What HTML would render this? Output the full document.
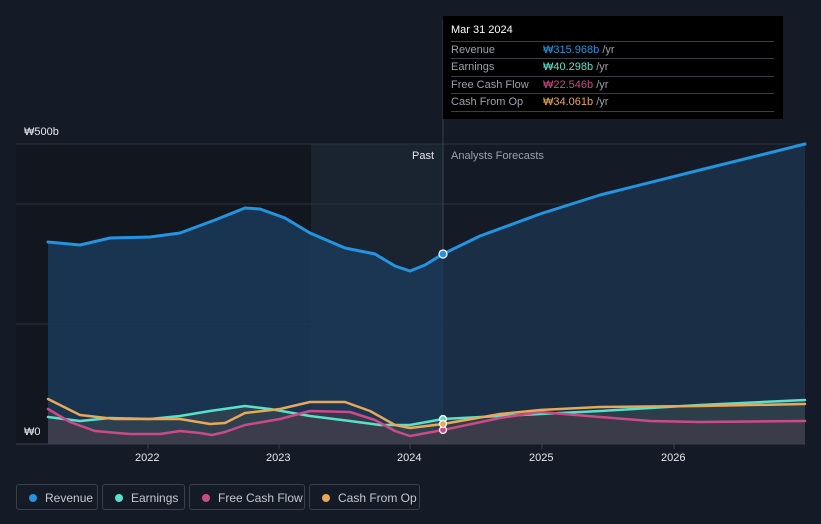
<!DOCTYPE html>
<html><head><meta charset="utf-8"><style>
body{margin:0;width:821px;height:524px;background:#151b26;font-family:"Liberation Sans","Noto Sans CJK KR",sans-serif;overflow:hidden;position:relative}
.tt{position:absolute;left:443px;top:16px;width:340px;height:103px;background:#000;color:#fff;font-size:11px}
.tt .h{position:absolute;left:8px;top:8px;font-size:11px}
.row{position:absolute;left:8px;width:323px;height:17px;border-top:1px solid #3a3f47;color:#9ba1aa;line-height:17px}
.row span{position:absolute;left:92px}
.leg{position:absolute;top:484px;height:26px;border:1px solid #3b414b;border-radius:3px;color:#c4c8ce;font-size:12px;line-height:26px;box-sizing:border-box}
.leg i{position:absolute;left:12px;top:9px;width:8px;height:8px;border-radius:50%}
.leg b{font-weight:normal;position:absolute;left:28px}
.ax{position:absolute;color:#e6e8eb;font-size:11px}
</style></head><body>
<svg width="821" height="524" style="position:absolute;left:0;top:0">
<defs><linearGradient id="g" x1="0" y1="0" x2="0" y2="1"><stop offset="0" stop-color="#1e3a57"/><stop offset="1" stop-color="#16283c"/></linearGradient></defs>
<rect x="16" y="144" width="427" height="300" fill="#12171f"/>
<rect x="311" y="144" width="132" height="300" fill="#1a2330"/>
<line x1="16" y1="144" x2="805" y2="144" stroke="#2c333e"/>
<line x1="16" y1="204" x2="805" y2="204" stroke="#2c333e"/>
<line x1="16" y1="324" x2="805" y2="324" stroke="#2c333e"/>
<line x1="16" y1="444" x2="805" y2="444" stroke="#3a414c"/>
<line x1="443" y1="20" x2="443" y2="444" stroke="#3a414c"/>
<path d="M48,242 L80,245 L110,238 L150,237 L180,233 L215,220 L245,208 L260,209 L285,218 L310,233 L345,248 L375,254 L395,266 L410,271 L425,265 L443,254 L443,444 L48,444Z" fill="#1b3a59" opacity="0.85"/>
<path d="M443,254 L480,236 L540,214 L600,195 L700,170 L805,144 L805,444 L443,444Z" fill="#1b3149" opacity="0.9"/>
<path d="M48,417 L80,421 L110,418 L150,419 L180,416 L210,411 L245,406 L270,409 L310,416 L350,421 L380,425 L410,425 L443,419 L500,416 L600,411 L700,405 L805,400 L805,444 L48,444Z" fill="#3a4a50" opacity="0.6"/>
<path d="M48,409 L70,422 L95,431 L130,434 L160,434 L180,431 L200,433 L212,435 L225,432 L245,425 L280,419 L310,411 L350,412 L375,420 L395,431 L410,436 L443,430 L500,418 L540,412 L600,417 L650,421 L700,422 L805,421 L805,444 L48,444Z" fill="#4a3a48" opacity="0.5"/>
<g fill="none" stroke-width="3" stroke-linejoin="round" stroke-linecap="round">
<path d="M48,242 L80,245 L110,238 L150,237 L180,233 L215,220 L245,208 L260,209 L285,218 L310,233 L345,248 L375,254 L395,266 L410,271 L425,265 L443,254 L480,236 L540,214 L600,195 L700,170 L805,144" stroke="#2394df"/>
<path d="M48,417 L80,421 L110,418 L150,419 L180,416 L210,411 L245,406 L270,409 L310,416 L350,421 L380,425 L410,425 L443,419 L500,416 L600,411 L700,405 L805,400" stroke="#58e1c8" stroke-width="2.5"/>
<path d="M48,409 L70,422 L95,431 L130,434 L160,434 L180,431 L200,433 L212,435 L225,432 L245,425 L280,419 L310,411 L350,412 L375,420 L395,431 L410,436 L443,430 L500,418 L540,412 L600,417 L650,421 L700,422 L805,421" stroke="#cc4b86" stroke-width="2.5"/>
<path d="M48,399 L80,415 L115,419 L150,419 L180,419 L210,424 L225,423 L245,413 L280,409 L310,402 L345,402 L370,411 L395,425 L410,428 L443,424 L500,414 L540,410 L600,407 L700,406 L805,404" stroke="#e8a857" stroke-width="2.5"/>
</g>
<g stroke="#fff" stroke-width="1.2"><circle cx="443" cy="254" r="4" fill="#2394df"/><circle cx="443" cy="419" r="3.5" fill="#58e1c8"/><circle cx="443" cy="430" r="3.5" fill="#cc4b86"/><circle cx="443" cy="424" r="3.5" fill="#e8a857"/></g>
<g stroke="#3a414c"><line x1="148" y1="444" x2="148" y2="449"/><line x1="279" y1="444" x2="279" y2="449"/><line x1="410" y1="444" x2="410" y2="449"/><line x1="542" y1="444" x2="542" y2="449"/><line x1="674" y1="444" x2="674" y2="449"/></g>
</svg>
<div class="ax" style="left:24px;top:126px">₩500b</div>
<div class="ax" style="left:24px;top:426px">₩0</div>
<div class="ax" style="left:412px;top:150px">Past</div>
<div class="ax" style="left:451px;top:150px;color:#9ba1aa">Analysts Forecasts</div>
<div class="ax" style="left:135px;top:452px">2022</div>
<div class="ax" style="left:266px;top:452px">2023</div>
<div class="ax" style="left:397px;top:452px">2024</div>
<div class="ax" style="left:529px;top:452px">2025</div>
<div class="ax" style="left:661px;top:452px">2026</div>
<div class="tt"><div class="h">Mar 31 2024</div>
<div class="row" style="top:25px">Revenue<span style="color:#2394df">₩315.968b <em style="font-style:normal;color:#9ba1aa">/yr</em></span></div>
<div class="row" style="top:42px">Earnings<span style="color:#58e1c8">₩40.298b <em style="font-style:normal;color:#9ba1aa">/yr</em></span></div>
<div class="row" style="top:60px">Free Cash Flow<span style="color:#cc4b86">₩22.546b <em style="font-style:normal;color:#9ba1aa">/yr</em></span></div>
<div class="row" style="top:77px;border-bottom:1px solid #3a3f47">Cash From Op<span style="color:#e8a857">₩34.061b <em style="font-style:normal;color:#9ba1aa">/yr</em></span></div>
</div>
<div class="leg" style="left:16px;width:82px"><i style="background:#2394df"></i><b>Revenue</b></div>
<div class="leg" style="left:102px;width:83px"><i style="background:#58e1c8"></i><b>Earnings</b></div>
<div class="leg" style="left:189px;width:116px"><i style="background:#cc4b86"></i><b>Free Cash Flow</b></div>
<div class="leg" style="left:309px;width:111px"><i style="background:#e8a857"></i><b>Cash From Op</b></div>
</body></html>
